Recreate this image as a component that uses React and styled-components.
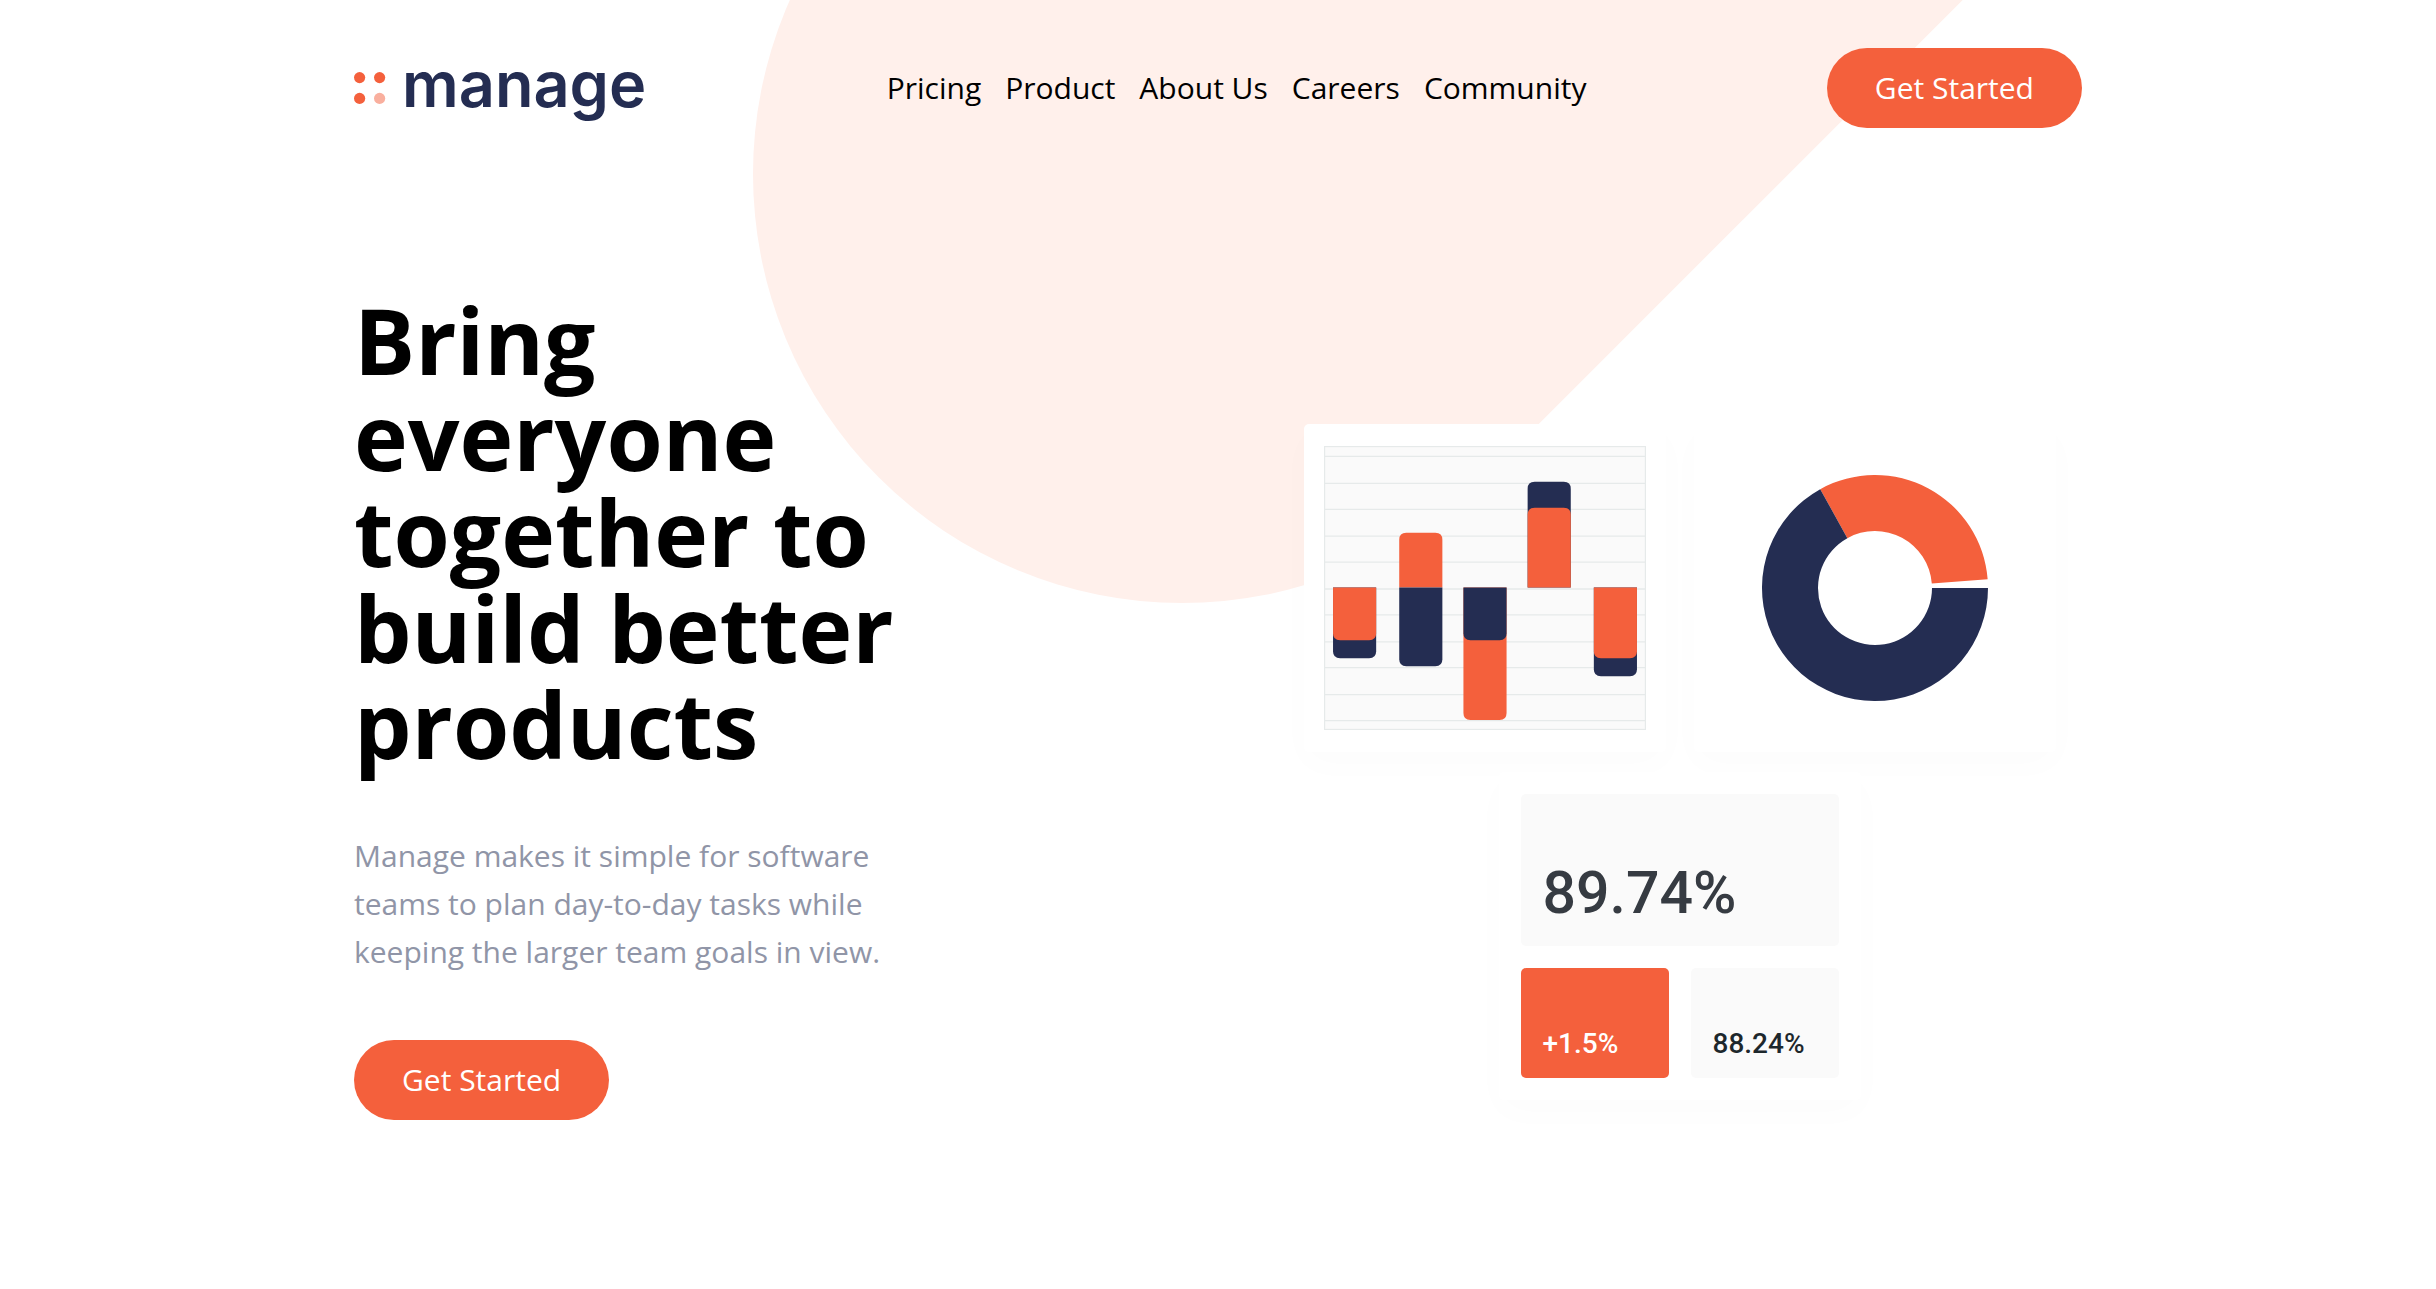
import React from "react";
import styled, { createGlobalStyle } from "styled-components";

const colors = {
  orange: "#f4603c",
  navy: "#242d52",
  blush: "#fff0eb",
  slate: "#9095a7",
  tile: "#fafafa",
  rule: "#e6eaea",
};

const GlobalStyle = createGlobalStyle`
  *, *::before, *::after { box-sizing: border-box; }
  body {
    margin: 0;
    background: #fff;
    color: #000;
    font-family: "Open Sans", "Noto Sans", sans-serif;
    font-size: 30px;
    line-height: 48px;
  }
  h1, p, ul { margin: 0; padding: 0; }
`;

const Page = styled.div`
  position: relative;
  min-height: 100vh;
  overflow: hidden;
`;

const Blob = styled.div`
  position: absolute;
  top: -255px;
  left: calc(50% - 465px);
  width: 1800px;
  height: 858px;
  border-radius: 429px;
  background: ${colors.blush};
  transform: rotate(-45deg);
  transform-origin: 429px 429px;
`;

const Container = styled.div`
  position: relative;
  max-width: 1824px;
  margin: 0 auto;
  padding: 0 48px;
`;

const Header = styled.header`
  display: flex;
  align-items: center;
  justify-content: space-between;
  padding: 48px 0;
`;

const Logo = styled.a`
  display: flex;
  align-items: center;
  gap: 16px;
  color: ${colors.navy};
  text-decoration: none;
`;

const LogoMark = styled.svg`
  display: block;
  width: 32px;
  height: 32px;
`;

const Wordmark = styled.span`
  padding-bottom: 8px;
  font-family: Inter, sans-serif;
  font-size: 63px;
  font-weight: 600;
  line-height: 64px;
`;

const NavList = styled.ul`
  display: flex;
  gap: 24px;
  list-style: none;
`;

const NavLink = styled.a`
  color: inherit;
  text-decoration: none;
`;

const Button = styled.button`
  padding: 16px 48px;
  border: 0;
  border-radius: 40px;
  background: ${colors.orange};
  color: #fff;
  font: inherit;
  cursor: pointer;
`;

const Hero = styled.main`
  display: flex;
  align-items: flex-start;
  justify-content: space-between;
  padding: 116px 0 160px;
`;

const Copy = styled.section`
  max-width: 576px;
`;

const Title = styled.h1`
  && { margin-bottom: 60px; }
  font-size: 91px;
  font-weight: 700;
  line-height: 96px;
`;

const Lead = styled.p`
  && { margin-bottom: 64px; }
  color: ${colors.slate};
`;

const Cards = styled.section`
  display: flex;
  flex-wrap: wrap;
  justify-content: center;
  gap: 20px 28px;
  max-width: 780px;
  padding: 132px 25px 0 0;
`;

const Card = styled.div`
  width: 362px;
  height: 328px;
  padding: 22px 20px;
  border-radius: 5px;
  background: #fff;
  box-shadow: 0 12px 36px rgba(0, 0, 0, 0.014);
`;

const Chart = styled.svg`
  display: block;
  width: 100%;
  height: 100%;
`;

const Stats = styled(Card)`
  display: grid;
  grid-template-columns: 1fr 1fr;
  grid-template-rows: 152px 110px;
  gap: 22px;
  padding: 22px;
`;

const Stat = styled.div`
  display: flex;
  align-items: flex-end;
  grid-column: ${(p) => (p.$wide ? "1 / -1" : "auto")};
  padding: ${(p) => (p.$wide ? "24px 22px" : "20px 22px")};
  border-radius: 5px;
  background: ${(p) => (p.$accent ? colors.orange : colors.tile)};
  color: ${(p) => (p.$accent ? "#fff" : p.$wide ? "#363b42" : "#1d272c")};
  font-family: Roboto, sans-serif;
  font-size: ${(p) => (p.$wide ? "59px" : "28px")};
  font-weight: 500;
  line-height: 1;
`;

const links = ["Pricing", "Product", "About Us", "Careers", "Community"];

const gridLines = [10, 37, 63, 90, 116, 143, 169, 196, 222, 249, 275];

const topBar = (x, top) =>
  `M${x} 142V${top + 7}q0-7 7-7h29q7 0 7 7V142z`;
const bottomBar = (x, bottom) =>
  `M${x} 142V${bottom - 7}q0 7 7 7h29q7 0 7-7V142z`;

const bars = [
  { fill: colors.navy, d: bottomBar(9, 213) },
  { fill: colors.orange, d: bottomBar(9, 195) },
  { fill: colors.orange, d: topBar(75, 87) },
  { fill: colors.navy, d: bottomBar(75, 221) },
  { fill: colors.orange, d: bottomBar(139, 275) },
  { fill: colors.navy, d: bottomBar(139, 195) },
  { fill: colors.navy, d: topBar(203, 36) },
  { fill: colors.orange, d: topBar(203, 62) },
  { fill: colors.navy, d: bottomBar(269, 231) },
  { fill: colors.orange, d: bottomBar(269, 213) },
];

function BarChart() {
  return (
    <Chart viewBox="0 0 321 285" preserveAspectRatio="none" role="img" aria-label="Bar chart">
      <rect x="0.5" y="0.5" width="320" height="284" fill={colors.tile} stroke={colors.rule} strokeWidth="1.3" />
      {gridLines.map((y) => (
        <path key={y} d={`M0 ${y + 0.5}H321`} stroke={colors.rule} strokeWidth="1.3" />
      ))}
      {bars.map((bar) => (
        <path key={bar.d} d={bar.d} fill={bar.fill} />
      ))}
    </Chart>
  );
}

function ring(from, to, outer, inner) {
  const at = (deg, r) => {
    const a = (deg * Math.PI) / 180;
    return `${(Math.cos(a) * r).toFixed(2)} ${(-Math.sin(a) * r).toFixed(2)}`;
  };
  const large = to - from > 180 ? 1 : 0;
  return `M${at(from, outer)}A${outer} ${outer} 0 ${large} 0 ${at(to, outer)}L${at(to, inner)}A${inner} ${inner} 0 ${large} 1 ${at(from, inner)}z`;
}

function DonutChart() {
  return (
    <Chart viewBox="-161 -142 322 284" role="img" aria-label="Donut chart">
      <path d={ring(4.5, 119, 113, 57)} fill={colors.orange} />
      <path d={ring(119, 360, 113, 57)} fill={colors.navy} />
    </Chart>
  );
}

export default function App() {
  return (
    <Page>
      <GlobalStyle />
      <Blob />
      <Container>
        <Header>
          <Logo href="#">
            <LogoMark viewBox="0 0 32 32" aria-hidden="true">
              <circle cx="5.6" cy="5.6" r="5.6" fill={colors.orange} />
              <circle cx="25.6" cy="5.6" r="5.6" fill={colors.orange} />
              <circle cx="5.6" cy="26.4" r="5.6" fill={colors.orange} />
              <circle cx="25.6" cy="26.4" r="5.6" fill="#f9af9e" />
            </LogoMark>
            <Wordmark>manage</Wordmark>
          </Logo>
          <nav>
            <NavList>
              {links.map((label) => (
                <li key={label}>
                  <NavLink href="#">{label}</NavLink>
                </li>
              ))}
            </NavList>
          </nav>
          <Button type="button">Get Started</Button>
        </Header>
        <Hero>
          <Copy>
            <Title>Bring everyone together to build better products</Title>
            <Lead>
              Manage makes it simple for software teams to plan day-to-day tasks
              while keeping the larger team goals in view.
            </Lead>
            <Button type="button">Get Started</Button>
          </Copy>
          <Cards>
            <Card>
              <BarChart />
            </Card>
            <Card>
              <DonutChart />
            </Card>
            <Stats>
              <Stat $wide>89.74%</Stat>
              <Stat $accent>+1.5%</Stat>
              <Stat>88.24%</Stat>
            </Stats>
          </Cards>
        </Hero>
      </Container>
    </Page>
  );
}
